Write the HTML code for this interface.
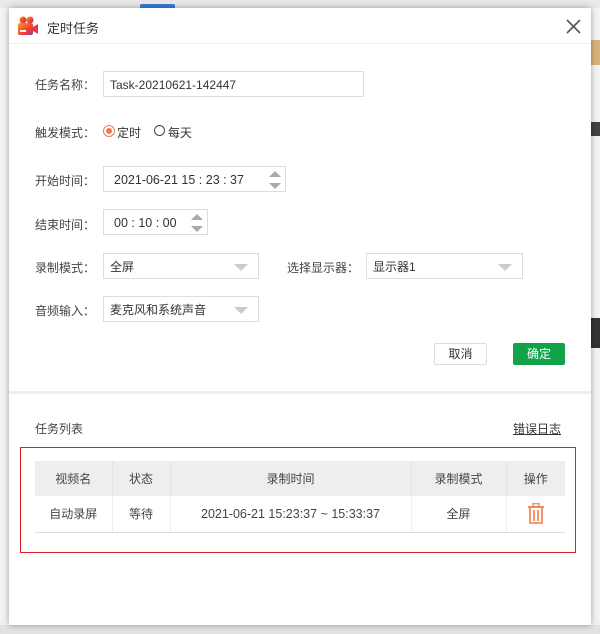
<!DOCTYPE html>
<html><head><meta charset="utf-8"><style>
*{margin:0;padding:0;box-sizing:border-box}
body{width:600px;height:634px;position:relative;overflow:hidden;background:#f3f3f3;font-family:"Liberation Sans","Noto Sans CJK SC",sans-serif;font-size:12px;color:#333}
.a{position:absolute}
.dlg{left:9px;top:8px;width:582px;height:617px;background:#fff;box-shadow:0 0 6px rgba(0,0,0,.35)}
.lbl{font-size:12px;color:#444}
.inp{border:1px solid #ddd;background:#fff;height:26px;line-height:26px;padding-left:6px;font-size:12px;color:#333}
.arr{position:absolute;right:10px;top:10px;width:0;height:0;border-left:7px solid transparent;border-right:7px solid transparent;border-top:7px solid #ccc}
.spin{position:absolute;right:4px;top:4px;width:12px;height:18px}
.spin:before{content:"";position:absolute;left:0;top:0;border-left:6px solid transparent;border-right:6px solid transparent;border-bottom:6px solid #aaa}
.spin:after{content:"";position:absolute;left:0;bottom:0;border-left:6px solid transparent;border-right:6px solid transparent;border-top:6px solid #aaa}
table{border-collapse:collapse;position:absolute;left:35px;top:461px;width:530px;font-size:12px;color:#444}
th{background:#eeeeee;font-weight:normal;height:35px;border-left:1px solid #e2e2e2}
td{height:36px;text-align:center;border-left:1px solid #eee;border-bottom:1px solid #ddd}
th:first-child,td:first-child{border-left:none}
</style></head><body>
<div class="a" style="left:0;top:0;width:600px;height:8px;background:#e9e9e9"></div>
<div class="a" style="left:140px;top:4px;width:35px;height:5px;background:#3a7bd5;border-radius:2px"></div>
<div class="a" style="left:591px;top:40px;width:9px;height:25px;background:#d8b27a"></div>
<div class="a" style="left:591px;top:122px;width:9px;height:14px;background:#444"></div>
<div class="a" style="left:591px;top:318px;width:9px;height:30px;background:#333"></div>
<div class="a" style="left:0;top:625px;width:600px;height:9px;background:#e2e2e2"></div>
<div class="a dlg"></div>
<svg class="a" style="left:17px;top:15px" width="22" height="22" viewBox="0 0 22 22"><defs><linearGradient id="g" x1="0" y1="0" x2="1" y2="1"><stop offset="0" stop-color="#ff9a1e"/><stop offset=".6" stop-color="#f0402a"/><stop offset="1" stop-color="#a030c0"/></linearGradient></defs><circle cx="6" cy="5" r="3.5" fill="url(#g)"/><circle cx="13" cy="5" r="3.5" fill="url(#g)"/><rect x="1" y="8" width="15" height="12" rx="2" fill="url(#g)"/><path d="M16 12 L21 9 L21 19 L16 16Z" fill="#e63a3a"/><rect x="3" y="15" width="6" height="2" fill="#fff"/></svg>
<div class="a" style="left:47px;top:18px;font-size:13px;color:#333">定时任务</div>
<svg class="a" style="left:566px;top:19px" width="15" height="15" viewBox="0 0 15 15"><path d="M1 1L14 14M14 1L1 14" stroke="#555" stroke-width="1.6"/></svg>
<div class="a" style="left:9px;top:43px;width:582px;height:1px;background:#eee"></div>

<div class="a lbl" style="left:35px;top:76px">任务名称：</div>
<div class="a inp" style="left:103px;top:71px;width:261px">Task-20210621-142447</div>
<div class="a lbl" style="left:35px;top:124px">触发模式：</div>
<div class="a" style="left:103px;top:125px;width:12px;height:12px;border:1px solid #f07a4a;border-radius:50%"><div style="margin:2px;width:6px;height:6px;border-radius:50%;background:#f07a4a"></div></div>
<div class="a lbl" style="left:117px;top:124px;color:#333">定时</div>
<div class="a" style="left:154px;top:125px;width:11px;height:11px;border:1px solid #444;border-radius:50%"></div>
<div class="a lbl" style="left:168px;top:124px;color:#333">每天</div>
<div class="a lbl" style="left:35px;top:172px">开始时间：</div>
<div class="a inp" style="left:103px;top:166px;width:183px;padding-left:10px;font-size:12.5px">2021-06-21 15 : 23 : 37<span class="spin"></span></div>
<div class="a lbl" style="left:35px;top:216px">结束时间：</div>
<div class="a inp" style="left:103px;top:209px;width:105px;padding-left:10px;font-size:12.5px">00 : 10 : 00<span class="spin"></span></div>
<div class="a lbl" style="left:35px;top:259px">录制模式：</div>
<div class="a inp" style="left:103px;top:253px;width:156px">全屏<span class="arr"></span></div>
<div class="a lbl" style="left:287px;top:259px">选择显示器：</div>
<div class="a inp" style="left:366px;top:253px;width:157px">显示器1<span class="arr"></span></div>
<div class="a lbl" style="left:35px;top:302px">音频输入：</div>
<div class="a inp" style="left:103px;top:296px;width:156px">麦克风和系统声音<span class="arr"></span></div>
<div class="a" style="left:434px;top:343px;width:53px;height:22px;border:1px solid #ddd;border-radius:2px;text-align:center;line-height:20px;color:#333">取消</div>
<div class="a" style="left:513px;top:343px;width:52px;height:22px;background:#12a24a;border-radius:2px;text-align:center;line-height:22px;color:#fff">确定</div>
<div class="a" style="left:9px;top:391px;width:582px;height:3px;background:#eee"></div>

<div class="a lbl" style="left:35px;top:420px">任务列表</div>
<div class="a lbl" style="left:513px;top:420px;text-decoration:underline;color:#333">错误日志</div>
<div class="a" style="left:20px;top:447px;width:556px;height:106px;border:1px solid #e0202a"></div>
<table>
<tr><th style="width:77px">视频名</th><th style="width:58px">状态</th><th style="width:241px">录制时间</th><th style="width:95px">录制模式</th><th>操作</th></tr>
<tr><td>自动录屏</td><td>等待</td><td style="font-size:12.5px">2021-06-21 15:23:37 ~ 15:33:37</td><td>全屏</td><td><svg width="18" height="21" viewBox="0 0 18 21" style="vertical-align:middle"><rect x="6" y="0.5" width="6" height="3" fill="none" stroke="#f7875e" stroke-width="1.4"/><rect x="1" y="3" width="16" height="2" fill="#f7875e"/><path d="M3 5v15h12V5" fill="none" stroke="#f7875e" stroke-width="1.8"/><path d="M7 7v11M11 7v11" stroke="#f7875e" stroke-width="1.8"/></svg></td></tr>
</table>
</body></html>
